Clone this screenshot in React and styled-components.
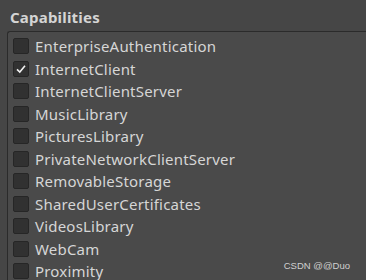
import styled, { createGlobalStyle } from 'styled-components';

const capabilities = [
  { name: 'EnterpriseAuthentication', checked: false },
  { name: 'InternetClient', checked: true },
  { name: 'InternetClientServer', checked: false },
  { name: 'MusicLibrary', checked: false },
  { name: 'PicturesLibrary', checked: false },
  { name: 'PrivateNetworkClientServer', checked: false },
  { name: 'RemovableStorage', checked: false },
  { name: 'SharedUserCertificates', checked: false },
  { name: 'VideosLibrary', checked: false },
  { name: 'WebCam', checked: false },
  { name: 'Proximity', checked: false },
];

const GlobalStyle = createGlobalStyle`
  html, body {
    margin: 0;
    padding: 0;
    background: #464646;
    overflow: hidden;
  }
`;

const App = () => {
  return (
    <StyledPanel>
      <GlobalStyle />
      <StyledTitle>Capabilities</StyledTitle>
      <StyledList>
        {capabilities.map((item) => (
          <StyledRow key={item.name}>
            <StyledBox>
              {item.checked && (
                <svg width='12' height='12' viewBox='0 0 12 12'>
                  <path d='M2 6.3 L4.8 9 L10 2.8' fill='none' stroke='#f2f2f2' strokeWidth='1.6' />
                </svg>
              )}
            </StyledBox>
            <StyledLabel>{item.name}</StyledLabel>
          </StyledRow>
        ))}
      </StyledList>
      <StyledMark>CSDN @@Duo</StyledMark>
    </StyledPanel>
  );
};

const StyledPanel = styled.div`
  position: relative;
  width: 366px;
  height: 280px;
  background: #464646;
  font-family: 'Noto Sans', 'Open Sans', sans-serif;
  overflow: hidden;
`;

const StyledTitle = styled.div`
  height: 31px;
  padding-left: 10px;
  box-sizing: border-box;
  font-size: 15px;
  font-weight: 700;
  letter-spacing: 0.2px;
  line-height: 34px;
  color: #d4d4d4;
`;

const StyledList = styled.div`
  margin-left: 7px;
  border-top: 1px solid #2b2b2b;
  border-left: 1px solid #2b2b2b;
  border-top-left-radius: 3px;
  background: #4a4a4a;
  padding: 3px 0 0 5px;
  display: flex;
  flex-direction: column;
`;

const StyledRow = styled.div`
  display: flex;
  align-items: center;
  height: 22.5px;
  gap: 6px;
`;

const StyledBox = styled.div`
  width: 16px;
  height: 16px;
  box-sizing: border-box;
  border: 1px solid #262626;
  border-radius: 2px;
  background: #313131;
  display: flex;
  align-items: center;
  justify-content: center;
`;

const StyledLabel = styled.span`
  font-size: 15px;
  letter-spacing: 0.2px;
  color: #d6d6d6;
  line-height: 22px;
`;

const StyledMark = styled.div`
  position: absolute;
  right: 16px;
  bottom: 9px;
  font-family: 'Liberation Sans', Arial, sans-serif;
  font-size: 9.5px;
  color: #d0d0d0;
`;

export default App;
